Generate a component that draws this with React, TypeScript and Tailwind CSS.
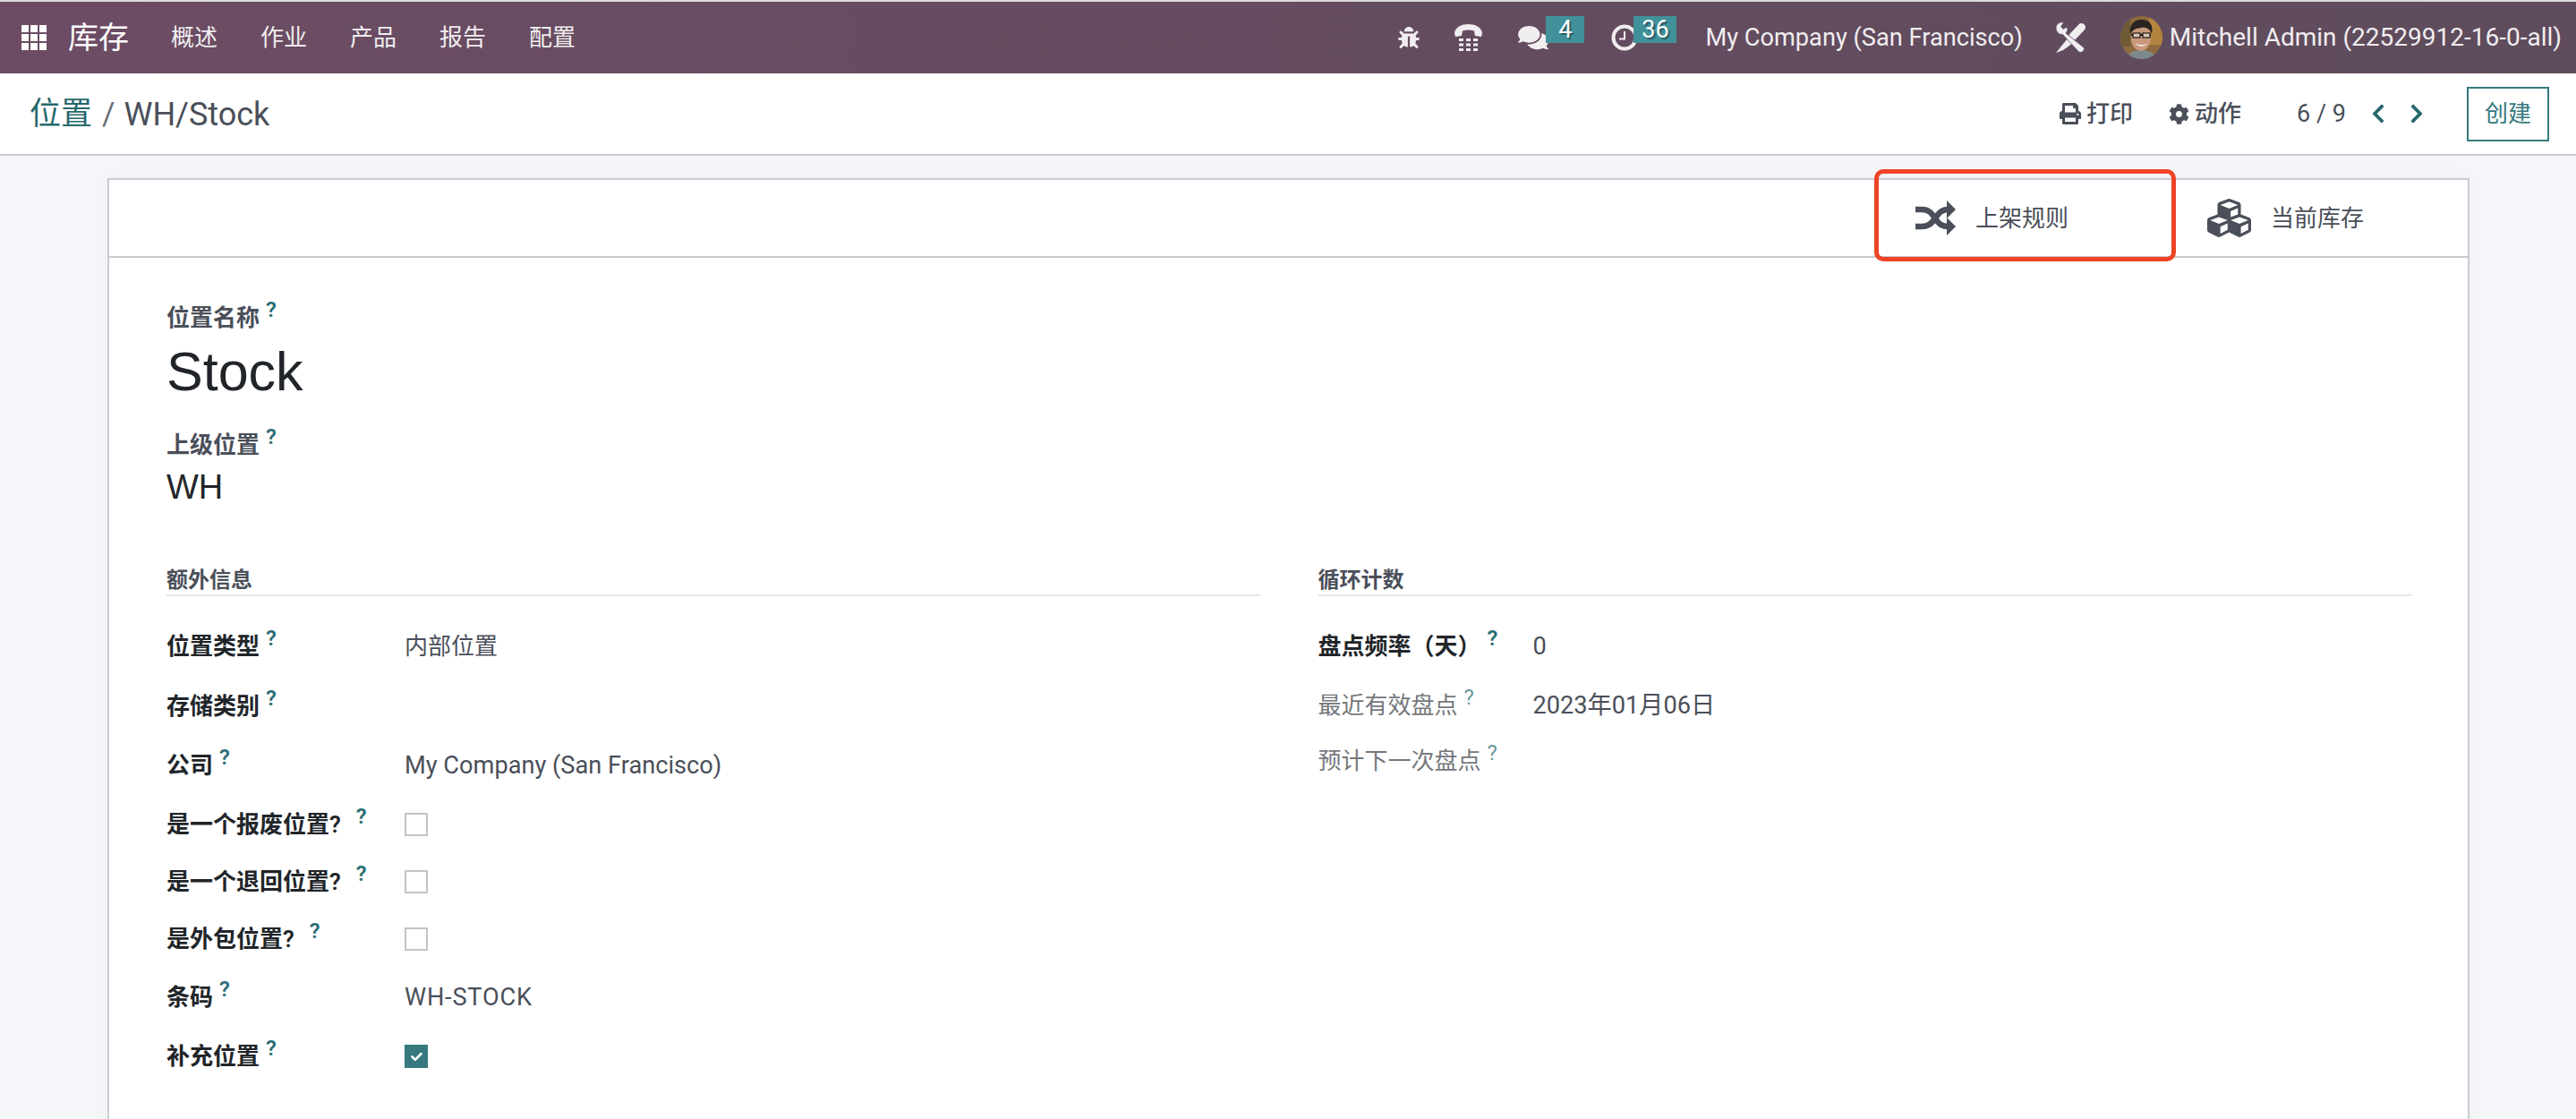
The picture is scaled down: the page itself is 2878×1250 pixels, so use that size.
import { FaBug, FaComments, FaPrint, FaCog, FaChevronLeft, FaChevronRight, FaCheck, FaCubes } from "react-icons/fa";

const menus = ["概述", "作业", "产品", "报告", "配置"];

function Help({ className = "" }: { className?: string }) {
  return (
    <span className={`ml-[7px] -mt-[6px] text-[24px] leading-[24px] text-[#2b6d73] ${className}`}>?</span>
  );
}

function Checkbox({ checked = false }: { checked?: boolean }) {
  if (checked) {
    return (
      <span className="w-[26px] h-[26px] bg-[#35797e] flex items-center justify-center text-white">
        <FaCheck className="w-[13px] h-[13px]" />
      </span>
    );
  }
  return <span className="w-[26px] h-[26px] border-2 border-[#c4c4c4] bg-white" />;
}

function Row({ label, value, check, labelClass = "w-[266px]", hClass = "h-[66px]", gap = "", valueClass = "text-[27.2px]" }: {
  label: string;
  value?: string;
  check?: "on" | "off";
  labelClass?: string;
  hClass?: string;
  gap?: string;
  valueClass?: string;
}) {
  return (
    <div className={`flex items-center ${hClass}`}>
      <div className={`flex items-start font-semibold text-[#212529] ${labelClass}`}>
        <span className="leading-[30px]">{label}</span>
        <Help className={gap} />
      </div>
      {value && <span className={`text-[#4a4f59] ${valueClass}`}>{value}</span>}
      {check && <Checkbox checked={check === "on"} />}
    </div>
  );
}

function Phone() {
  return (
    <svg viewBox="0 0 31 30" className="w-[31px] h-[30px]" fill="#f1eef0">
      <path d="M0 10C1 3 8 0 15.500 0S30 3 31 10L30 14L23 13L22 7.500C18 6 13 6 9 7.500L8 13L1 14Z" />
      {[5, 13, 21].map((x) =>
        [16, 21.500, 27].map((y) => <rect key={`${x}-${y}`} x={x} y={y} width="5" height="3" />)
      )}
    </svg>
  );
}

function Clock() {
  return (
    <svg viewBox="0 0 30 30" className="w-[30px] h-[30px]" fill="none" stroke="#f1eef0">
      <circle cx="15" cy="15" r="12.500" strokeWidth="4" />
      <path d="M15 8V16.500H9" strokeWidth="2" />
    </svg>
  );
}

function Tools() {
  return (
    <svg viewBox="0 0 33 34" className="w-[33px] h-[34px]" fill="#f1eef0">
      <path d="M28.500 5.500L19 15.500" stroke="#f1eef0" strokeWidth="9" strokeLinecap="round" fill="none" />
      <path d="M13 18L0 34L8 31L19 23Z" />
      <path d="M0 6C0 2 4 -1 9 0L5.500 4.500L8 7.500L12.500 5C13.500 8 12.500 11 11 12L31 28C33 32 28 35 25 32.500L7.500 13.500C3 14 0 10 0 6Z" stroke="#5e4c5c" strokeWidth="0.800" />
    </svg>
  );
}

function Shuffle() {
  return (
    <svg viewBox="0 0 45 39" className="w-[45px] h-[39px]" fill="#4a4f59">
      <path d="M0 10H7C15 10 18 14 22 20C26 26 29 29 37 29" fill="none" stroke="#4a4f59" strokeWidth="6.500" />
      <path d="M0 29H7C15 29 18 25 22 20C26 14 29 10 37 10" fill="none" stroke="#4a4f59" strokeWidth="6.500" />
      <path d="M35 0L45 10L35 20Z" />
      <path d="M35 19L45 29L35 39Z" />
    </svg>
  );
}

function Grid() {
  return (
    <div className="grid grid-cols-3 gap-[2px] w-[28px] h-[28px]">
      {Array.from({ length: 9 }).map((_, i) => (
        <span key={i} className="bg-white" />
      ))}
    </div>
  );
}

function Avatar() {
  return (
    <svg viewBox="0 0 47 48" className="w-[47px] h-[48px]">
      <clipPath id="av">
        <ellipse cx="23.500" cy="24" rx="23.500" ry="24" />
      </clipPath>
      <g clipPath="url(#av)">
        <rect width="47" height="48" fill="#8f6a3e" />
        <rect x="32" width="15" height="32" fill="#b3843f" />
        <rect width="11" height="34" fill="#6e5a35" />
        <path d="M6 48C9 40 16 38 23 38S38 40 41 48Z" fill="#7d8a8c" />
        <ellipse cx="23" cy="24" rx="11" ry="15" fill="#c9997c" />
        <path d="M11 20C9 8 17 3 25 4S37 10 35 20C33 14 29 12 23 13S14 15 11 20Z" fill="#2a2320" />
        <path d="M12 21H34" stroke="#1f1b19" strokeWidth="2" />
        <rect x="14" y="19" width="8" height="5" fill="#d9c3b3" stroke="#1f1b19" strokeWidth="1.200" />
        <rect x="25" y="19" width="8" height="5" fill="#d9c3b3" stroke="#1f1b19" strokeWidth="1.200" />
        <path d="M17 30C20 33 27 33 30 30C28 35 19 35 17 30Z" fill="#f6efe9" />
      </g>
    </svg>
  );
}

export default function App() {
  return (
    <div className="w-[2878px] h-[1250px] overflow-hidden bg-[#f5f6fa] text-[26px] [font-family:Roboto,'Noto_Sans_CJK_SC',sans-serif]">
      <div className="h-[2px] bg-[#dadada]" />

      {/* top nav */}
      <nav className="h-[80px] flex items-center bg-gradient-to-r from-[#6c4c64] to-[#5e4c5c] text-[#f1eef0]">
        <div className="ml-[24px]">
          <Grid />
        </div>
        <span className="ml-[24px] text-[34px] text-white">库存</span>
        <div className="ml-[47px] flex gap-[48px]">
          {menus.map((m) => (
            <span key={m}>{m}</span>
          ))}
        </div>
        <div className="ml-auto flex items-center pr-[16px]">
          <FaBug className="w-[24px] h-[24px]" />
          <div className="ml-[39px]">
            <Phone />
          </div>
          <div className="relative ml-[40px] w-[34px] flex">
            <FaComments className="w-[36px] h-[30px]" />
            <span className="absolute left-[31px] -top-[9px] w-[43px] h-[30px] bg-[#41919a] flex items-center justify-center text-[27px] text-white [text-shadow:2px_2px_0_#2a5f66]">4</span>
          </div>
          <div className="relative ml-[70px] w-[30px] flex">
            <Clock />
            <span className="absolute left-[25px] -top-[9px] w-[48px] h-[30px] bg-[#41919a] flex items-center justify-center text-[27px] text-white [text-shadow:2px_2px_0_#2a5f66]">36</span>
          </div>
          <span className="ml-[75px] text-[27.2px]">My Company (San Francisco)</span>
          <div className="ml-[37px] flex">
            <Tools />
          </div>
          <div className="ml-[39px] flex">
            <Avatar />
          </div>
          <span className="ml-[8px] text-[28px]">Mitchell Admin (22529912-16-0-all)</span>
        </div>
      </nav>

      {/* control panel */}
      <div className="h-[92px] flex items-center bg-white border-b-2 border-[#c9cad1]">
        <div className="ml-[33px] pt-[2px] flex items-center text-[35px] text-[#4a4f59]">
          <span className="text-[#27686d]">位置</span>
          <span className="ml-[11px] text-[#6c7076]">/</span>
          <span className="ml-[10px] text-[36px]">WH/Stock</span>
        </div>
        <div className="ml-auto flex items-center text-[#4a4f59] pr-[30px]">
          <FaPrint className="w-[24px] h-[24px]" />
          <span className="ml-[6px] font-medium">打印</span>
          <FaCog className="ml-[40px] w-[23px] h-[23px]" />
          <span className="ml-[6px] font-medium">动作</span>
          <span className="ml-[62px] text-[27px]">6 / 9</span>
          <FaChevronLeft className="ml-[28px] w-[16px] h-[24px] text-[#27686d]" />
          <FaChevronRight className="ml-[27px] w-[16px] h-[24px] text-[#27686d]" />
          <button className="ml-[48px] w-[92px] h-[61px] border-2 border-[#35797e] text-[#35797e]">创建</button>
        </div>
      </div>

      {/* sheet */}
      <div className="relative mt-[25px] ml-[120px] w-[2639px] bg-white border-x-2 border-t-2 border-[#cbccd2] h-[1100px] shadow-[0_0_20px_rgba(0,0,0,0.03)]">
        <div className="h-[87px] flex justify-end pr-[17px] border-b-2 border-[#cbccd2] text-[#4a4f59]">
          <div className="w-[323px] pl-[46px] flex items-center">
            <Shuffle />
            <span className="ml-[22px] mt-[2px]">上架规则</span>
          </div>
          <div className="w-[323px] pl-[46px] flex items-center">
            <FaCubes className="w-[55px] h-[49px]" />
            <span className="ml-[19px] mt-[2px]">当前库存</span>
          </div>
        </div>
        <div className="absolute left-[1972px] -top-[12px] w-[337px] h-[103px] border-[5px] border-[#ee4426] rounded-[10px]" />

        <div className="pl-[64px] pr-[63px] pt-[52px]">
          <div className="flex items-start text-[#4a4f59] font-semibold">
            <span className="leading-[30px]">位置名称</span>
            <Help />
          </div>
          <div className="mt-[10px] h-[70px] leading-[70px] text-[61px] text-[#212529] [font-family:'Liberation_Sans',sans-serif]">Stock</div>
          <div className="mt-[32px] flex items-start text-[#4a4f59] font-semibold">
            <span className="leading-[30px]">上级位置</span>
            <Help />
          </div>
          <div className="mt-[10px] h-[45px] leading-[45px] text-[38px] text-[#212529] [font-family:'Liberation_Sans',sans-serif]">WH</div>

          <div className="mt-[67px] grid grid-cols-2 gap-[65px]">
            <div>
              <div className="pb-[2px] border-b-2 border-[#e6e6e6] text-[24px] leading-[28px] font-bold text-[#4a4f59]">额外信息</div>
              <div className="mt-[23px]">
                <Row label="位置类型" value="内部位置" valueClass="" />
                <Row label="存储类别" hClass="h-[67px]" />
                <Row label="公司" value="My Company (San Francisco)" />
                <Row label="是一个报废位置?" check="off" hClass="h-[65px]" gap="ml-[17px]" />
                <Row label="是一个退回位置?" check="off" hClass="h-[64px]" gap="ml-[17px]" />
                <Row label="是外包位置?" check="off" hClass="h-[64px]" gap="ml-[17px]" />
                <Row label="条码" value="WH-STOCK" hClass="h-[66px]" valueClass="text-[27.2px] tracking-[0.8px]" />
                <Row label="补充位置" check="on" hClass="h-[66px]" />
              </div>
            </div>
            <div>
              <div className="pb-[2px] border-b-2 border-[#e6e6e6] text-[24px] leading-[28px] font-bold text-[#4a4f59]">循环计数</div>
              <div className="mt-[23px]">
                <Row label="盘点频率（天）" value="0" labelClass="w-[240px]" gap="ml-[6px]" />
                <Row label="最近有效盘点" value="2023年01月06日" labelClass="w-[240px] !font-normal !text-[#74777c]" gap="opacity-70" />
                <Row label="预计下一次盘点" labelClass="!font-normal !text-[#74777c]" hClass="h-[58px]" gap="opacity-70" />
              </div>
            </div>
          </div>
        </div>
      </div>
    </div>
  );
}
